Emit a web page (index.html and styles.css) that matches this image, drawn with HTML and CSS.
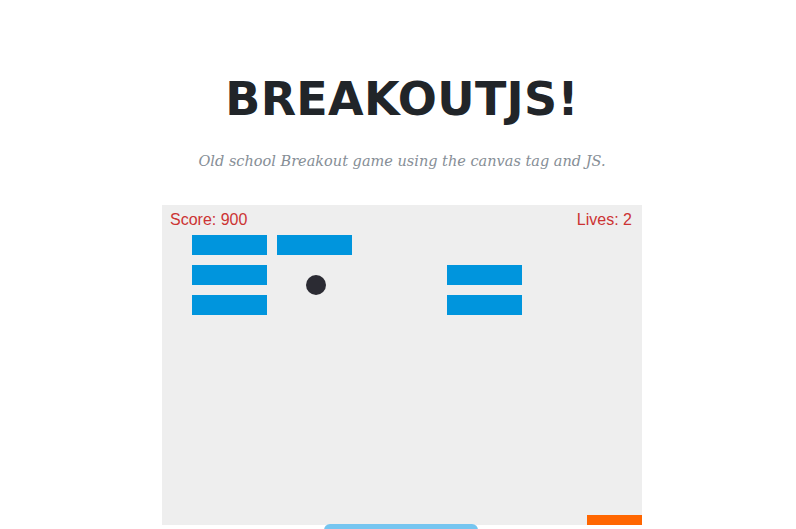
FILE: index.html
```html
<!DOCTYPE html>
<html>
<head>
<meta charset="utf-8">
<link rel="stylesheet" href="styles.css">
</head>
<body>
<main class="page">
  <h1 class="title">BREAKOUTJS!</h1>
  <p class="subtitle">Old school Breakout game using the canvas tag and JS.</p>
  <svg class="board" width="480" height="320" viewBox="0 0 480 320">
    <rect x="0" y="0" width="480" height="320" fill="#eeeeee"/>
    <g fill="#0095dd">
      <rect x="30" y="30" width="75" height="20"/>
      <rect x="115" y="30" width="75" height="20"/>
      <rect x="30" y="60" width="75" height="20"/>
      <rect x="30" y="90" width="75" height="20"/>
      <rect x="285" y="60" width="75" height="20"/>
      <rect x="285" y="90" width="75" height="20"/>
    </g>
    <circle cx="154" cy="80" r="10" fill="#2b2b33"/>
    <rect x="425" y="310" width="75" height="10" fill="#ff6600"/>
    <text x="8" y="20" class="hud">Score: 900</text>
    <text x="470" y="20" class="hud" text-anchor="end">Lives: 2</text>
  </svg>
  <button class="start" aria-label="Start game"></button>
</main>
</body>
</html>
```
FILE: styles.css
```css
html, body {
  margin: 0;
  padding: 0;
  background: #ffffff;
}
.page {
  display: flex;
  flex-direction: column;
  align-items: center;
  padding: 0 0 40px 8px;
}
.title {
  margin: 69px 0 0 0;
  font-family: "DejaVu Sans", sans-serif;
  font-weight: bold;
  font-size: 46px;
  line-height: 60px;
  letter-spacing: 0.3px;
  color: #212529;
}
.subtitle {
  margin: 22px 0 0 0;
  font-family: "DejaVu Serif", serif;
  font-style: italic;
  font-size: 14.5px;
  line-height: 20px;
  color: #868e96;
}
.board {
  display: block;
  margin-top: 34px;
}
.hud {
  font-family: "Liberation Sans", Arial, sans-serif;
  font-size: 16px;
  fill: #cc3333;
}
.start {
  margin-top: -1px;
  margin-left: -2px;
  width: 154px;
  height: 40px;
  border: none;
  border-radius: 6px;
  background: #75c5f0;
}
```
